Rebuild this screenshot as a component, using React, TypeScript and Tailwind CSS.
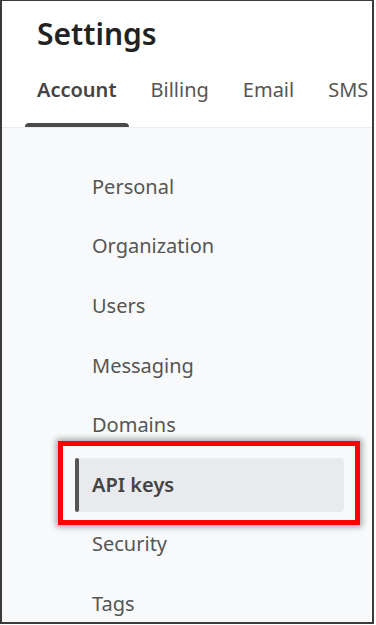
import React from "react";

const items = [
  "Personal",
  "Organization",
  "Users",
  "Messaging",
  "Domains",
  "API keys",
  "Security",
  "Tags",
];

export default function App() {
  return (
    <div
      className="relative w-[376px] h-[625px] overflow-hidden bg-white"
      style={{ fontFamily: '"Noto Sans", "Open Sans", sans-serif' }}
    >
      <div className="w-[374px] h-[624px] border-l-2 border-r-2 border-b-2 border-t border-[#3a3a3a] flex flex-col overflow-hidden">
        <div className="bg-white h-[127px] shrink-0 flex flex-col border-b border-[#ececec]">
          <h1 className="pl-[35px] pt-[12px] text-[30px] leading-[42px] font-semibold text-[#222]">
            Settings
          </h1>
          <div className="flex mt-auto pl-[23px] gap-[10px]">
            <div className="flex flex-col items-center">
              <span className="px-[12px] text-[20px] leading-[28px] font-semibold text-[#444]">
                Account
              </span>
              <div className="mt-[19px] h-[4px] w-full rounded-t-sm bg-[#4a4a4a]" />
            </div>
            <span className="px-[12px] text-[20px] leading-[28px] text-[#555]">
              Billing
            </span>
            <span className="px-[12px] text-[20px] leading-[28px] text-[#555]">
              Email
            </span>
            <span className="px-[12px] text-[20px] leading-[28px] text-[#555]">
              SMS
            </span>
          </div>
        </div>
        <div className="flex-1 bg-[#f8f9fa] pt-[32px] pl-[73px] pr-[28px]">
          <ul className="flex flex-col gap-[6px]">
            {items.map((t) =>
              t === "API keys" ? (
                <li
                  key={t}
                  className="relative h-[53.6px] shrink-0 flex items-center rounded-[4px] bg-[#e8eaed] pl-[17px] text-[20px] font-semibold text-[#444]"
                >
                  <span className="absolute left-0 top-0 h-full w-[4px] rounded-full bg-[#555]" />
                  {t}
                </li>
              ) : (
                <li
                  key={t}
                  className="h-[53.6px] shrink-0 flex items-center pl-[17px] text-[20px] text-[#555]"
                >
                  {t}
                </li>
              )
            )}
          </ul>
        </div>
      </div>
      <div className="absolute left-[58px] top-[441px] w-[302px] h-[84px] border-[5px] border-[#ff0000] shadow-[0_0_6px_2px_rgba(0,0,0,0.35)]" />
    </div>
  );
}
